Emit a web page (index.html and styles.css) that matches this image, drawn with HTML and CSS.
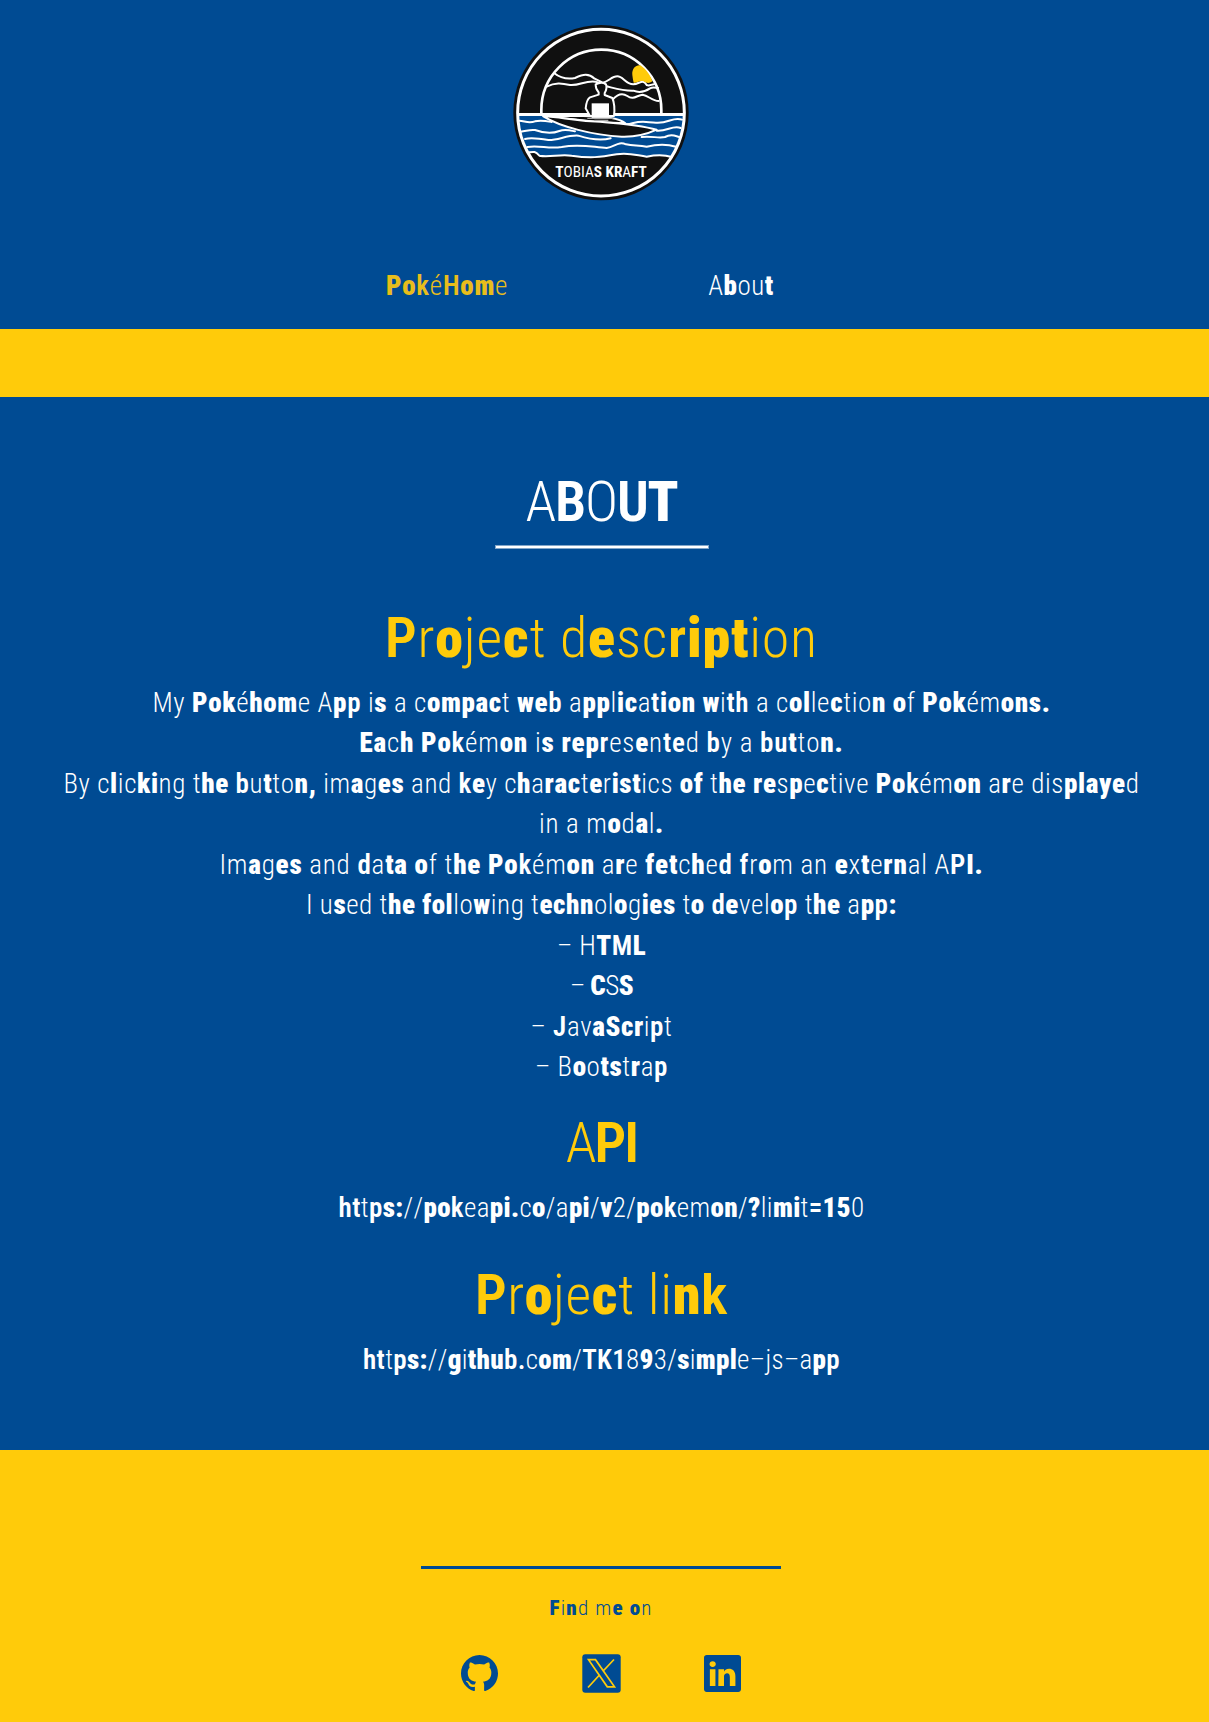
FILE: index.html
```
<!DOCTYPE html>
<html lang="en">
<head>
<meta charset="utf-8">
<title>PokéHome – About</title>
<link rel="stylesheet" href="styles.css">
</head>
<body>
<header class="header">
  <svg class="logo" viewBox="39 27 528 531" role="img" aria-label="Tobias Kraft">
    <circle cx="303" cy="293" r="263" fill="#101010"/>
    <path fill="#004b93" d="M56 300H550C549 345 538 388 515 426C490 418 470 419 440 425C405 420 385 412 350 418C300 427 270 430 215 422C180 416 150 428 118 422C105 408 100 410 88 412C68 376 58 340 56 300Z"/>
    <g fill="none" stroke="#fff" stroke-linecap="round" stroke-linejoin="round">
      <circle cx="303" cy="293" r="250" stroke-width="9"/>
      <path d="M124 296V285A180 181 0 0 1 484 285V296" stroke-width="8"/>
      <path d="M56 298.500H550" stroke-width="9"/>
      <g stroke-width="6">
        <path d="M88 412C100 410 105 408 118 422C150 428 180 416 215 422C270 430 300 427 350 418C385 412 405 420 440 425C470 419 490 418 515 426"/>
        <path d="M162 174C182 190 200 194 225 189C250 178 265 174 284 191L308 203C325 200 335 184 352 184C370 184 375 207 400 208C420 206 428 190 440 210C448 214 454 208 462 208"/>
        <path d="M140 215C165 202 185 204 210 210C240 213 262 192 294 202M320 214C345 220 370 228 400 227C422 236 438 228 450 220C458 215 466 218 474 219"/>
        <path d="M338 254C350 240 366 232 382 243C400 257 412 240 428 239C446 242 456 258 476 258"/>
        <path d="M58 317C75 318 85 326 105 319C122 314 140 318 155 321M62 350C80 348 88 343 105 345C130 354 155 357 178 348C194 342 210 346 225 349"/>
        <path d="M75 372C95 367 120 371 145 375C175 376 200 360 235 362C270 373 302 378 332 370"/>
        <path d="M82 396C120 390 145 403 185 396C240 385 280 397 320 399C345 395 355 378 378 388C400 393 415 390 440 395C470 388 500 387 528 395"/>
        <path d="M335 331C360 322 375 333 400 324C430 316 445 323 468 323C505 326 520 304 546 314M470 347C500 350 520 329 542 339M425 366C455 362 475 371 495 366C515 355 525 363 538 366"/>
      </g>
    </g>
    <path fill="#ffcb0a" d="M397 180C395 160 408 149 421 151C437 162 450 177 457 199C446 207 440 204 431 199C417 195 408 206 401 203Q398 190 397 180Z"/>
    <g fill="#101010" stroke="#fff" stroke-width="6" stroke-linejoin="round">
      <path d="M270 303L257 280Q260 252 270 247L296 239V232Q286 220 287 208Q305 198 318 208Q322 222 314 234V240L337 249Q346 270 342 303Z"/>
      <path d="M130 303H240Q350 302 376 325L300 322Z"/>
      <path d="M130 304C190 306 210 318 300 320C370 326 430 332 470 344C440 358 400 366 365 365C280 361 180 335 130 304Z"/>
    </g>
    <path fill="#fff" d="M275 265H327V309H275Z"/>
    <path fill="none" stroke="#aaa" stroke-width="4" d="M262 310H340M283 316H325"/>
    <text class="logo-name" x="166" y="485" textLength="274" lengthAdjust="spacingAndGlyphs"><tspan class="k">T</tspan>OBIA<tspan class="k">S</tspan> <tspan class="k">KR</tspan>A<tspan class="k">FT</tspan></text>
  </svg>
  <nav class="nav">
    <a class="nav-link active" href="#"><span class="t n1"><b>Po</b><i>k</i>é<i>H</i><b>om</b>e</span></a>
    <a class="nav-link" href="#"><span class="t n2">A<b>b</b>ou<b>t</b></span></a>
  </nav>
</header>
<div class="band"></div>
<main class="main">
  <h1 class="title"><span class="t">A<i>B</i>O<i>U</i><b>T</b></span></h1>
  <hr class="title-rule">
  <h2 class="heading"><span class="t h1"><i>P</i>r<b>o</b>je<b>c</b>t d<b>e</b>sc<i>r</i><b>ipt</b>ion</span></h2>
  <p class="text">
    <span class="t l1">My <b>Pok</b>é<b>hom</b>e A<b>p</b><i>p</i> i<b>s</b> a c<b>ompac</b>t <b>we</b><i>b</i> a<b>pp</b>l<b>ic</b>a<i>t</i><b>ion</b> <b>w</b>i<i>th</i> a c<b>ol</b>le<b>c</b>tio<b>n</b> <b>o</b>f <b>Pok</b>ém<b>ons.</b></span><br>
    <span class="t l2"><b>Ea</b>c<b>h</b> <b>Po</b><i>k</i>ém<b>on</b> i<b>s</b> <b>rep</b><i>r</i>es<b>e</b>n<i>te</i>d <i>b</i>y a <i>bu</i><b>t</b>to<b>n.</b></span><br>
    <span class="t l3">By c<b>l</b>ic<b>ki</b>ng t<b>he</b> <i>b</i>u<b>t</b>to<b>n,</b> im<b>a</b>g<b>es</b> and <i>k</i><b>e</b>y c<b>h</b>a<b>rac</b>t<b>e</b>r<b>ist</b>ics <b>of</b> t<b>he</b> <b>re</b>s<b>p</b>e<b>c</b>tive <b>Po</b><i>k</i>ém<b>on</b> a<b>r</b>e dis<b>playe</b>d</span><br>
    <span class="t l4">in a m<b>o</b>d<b>a</b>l<b>.</b></span><br>
    <span class="t l5">Im<b>a</b>g<b>es</b> and <i>d</i>a<b>ta</b> <b>o</b>f t<b>he</b> <b>Po</b><i>k</i>ém<b>on</b> a<b>r</b>e <b>fet</b>c<b>h</b>e<i>d</i> <i>f</i>r<b>o</b>m an <b>e</b>x<b>t</b>e<b>rn</b>al A<i>P</i><b>I.</b></span><br>
    <span class="t l6">I u<b>s</b>ed t<b>he</b> <b>fol</b>lo<b>w</b>ing t<b>echn</b>ol<b>o</b>g<b>ies</b> t<b>o</b> <i>d</i><b>e</b>vel<b>o</b><i>p</i> t<b>he</b> a<b>p</b><i>p</i><b>:</b></span><br>
    <span class="t l7">– H<b>T</b><i>M</i><b>L</b></span><br>
    <span class="t l8">– <b>C</b>S<b>S</b></span><br>
    <span class="t l9">– <i>J</i>av<b>aScr</b>i<i>p</i>t</span><br>
    <span class="t l10">– B<b>o</b>o<b>ts</b>t<b>r</b>a<i>p</i></span>
  </p>
  <h2 class="heading api"><span class="t">A<i>PI</i></span></h2>
  <p class="text"><span class="t u1"><i>ht</i>t<i>p</i><b>s:</b>//<b>po</b><i>k</i>ea<b>pi.</b>c<b>o</b>/a<b>pi</b>/<b>v</b>2/<b>po</b><i>k</i>em<b>on</b>/<b>?</b>li<b>mi</b>t<i>=</i><b>15</b>0</span></p>
  <h2 class="heading link"><span class="t"><i>P</i>r<b>o</b>je<b>c</b>t li<b>n</b><i>k</i></span></h2>
  <p class="text"><span class="t u2"><i>ht</i>t<i>p</i><b>s:</b>//<b>g</b>i<b>thu</b><i>b.</i>c<b>om</b>/<i>TK1</i>8<b>9</b>3/<b>s</b>i<b>mpl</b>e–js–a<b>p</b><i>p</i></span></p>
</main>
<footer class="footer">
  <hr class="footer-rule">
  <p class="find"><span class="t"><b>F</b>i<b>n</b>d m<b>e</b> <b>o</b>n</span></p>
  <div class="socials">
    <a href="#" aria-label="GitHub"><svg width="37" height="37" viewBox="0 0 16 16" fill="#004b93"><path d="M8 0C3.580 0 0 3.580 0 8c0 3.540 2.290 6.530 5.470 7.590.4.070.55-.17.55-.38 0-.19-.01-.82-.01-1.490-2.010.37-2.530-.49-2.690-.94-.09-.23-.48-.94-.82-1.130-.28-.15-.68-.52-.01-.53.63-.01 1.080.58 1.230.82.72 1.210 1.870.87 2.330.66.070-.52.28-.87.51-1.070-1.780-.2-3.640-.89-3.640-3.950 0-.87.31-1.590.82-2.150-.08-.2-.36-1.020.08-2.120 0 0 .67-.21 2.200.82.64-.18 1.320-.27 2-.27s1.360.09 2 .27c1.530-1.040 2.200-.82 2.200-.82.44 1.100.16 1.920.08 2.120.51.56.82 1.270.82 2.150 0 3.070-1.870 3.750-3.650 3.950.29.25.54.73.54 1.480 0 1.070-.01 1.930-.01 2.200 0 .21.15.46.55.38A8.010 8.010 0 0 0 16 8c0-4.420-3.580-8-8-8"/></svg></a>
    <a href="#" aria-label="X"><svg width="39" height="39" viewBox="0 0 39 39"><rect x=".3" y=".2" width="38.400" height="38.600" rx="3" fill="#004b93"/><path d="M32 5.500L20.700 17.500M17 21.500L6 33.500M6.500 5.700H13.500L32.500 32.800H25.300Z" fill="none" stroke="#ffcb0a" stroke-width="1.700"/></svg></a>
    <a href="#" aria-label="LinkedIn"><svg width="37" height="37" viewBox="0 0 16 16" fill="#004b93"><path d="M0 1.146C0 .513.526 0 1.175 0h13.650C15.474 0 16 .513 16 1.146v13.708c0 .633-.526 1.146-1.175 1.146H1.175C.526 16 0 15.487 0 14.854zm4.943 12.248V6.169H2.542v7.225zm-1.200-8.212c.837 0 1.358-.554 1.358-1.248-.015-.709-.52-1.248-1.342-1.248S2.400 3.226 2.400 3.934c0 .694.521 1.248 1.327 1.248zm4.908 8.212V9.359c0-.216.016-.432.08-.586.173-.431.568-.878 1.232-.878.869 0 1.216.662 1.216 1.634v3.865h2.401V9.250c0-2.220-1.184-3.252-2.764-3.252-1.274 0-1.845.7-2.165 1.193v.025h-.016l.016-.025V6.169h-2.400c.03.678 0 7.225 0 7.225z"/></svg></a>
  </div>
</footer>
</body>
</html>
```
FILE: styles.css
```
* { box-sizing: border-box; }

body {
  margin: 0;
  background: #ffcb0a;
  color: #fff;
  font-family: Roboto, "Open Sans", sans-serif;
  font-weight: 300;
  font-stretch: 79%;
  font-size: 27px;
  font-kerning: none;
}

h1, h2, p { margin: 0; font-weight: 300; }
a { color: inherit; text-decoration: none; }
i { font-style: normal; font-weight: 600; }
b { font-weight: 900; }

.t { white-space: nowrap; }

.header {
  height: 329px;
  padding: 24px 7px 0 0;
  background: #004b93;
}

.logo {
  display: block;
  width: 176px;
  height: 177px;
  margin: 0 auto;
}

.logo-name { font-size: 44px; fill: #fff; font-weight: 400; letter-spacing: 0; }
.logo-name .k { font-weight: 700; }

.nav {
  display: flex;
  gap: 200px;
  margin: 65px 0 0 386px;
  line-height: 40px;
}

.nav-link.active { color: #e8bd1b; }
.n1 { letter-spacing: .75px; }
.n2 { letter-spacing: .5px; }

.band { height: 68px; }

.main {
  height: 1053px;
  padding: 72px 6px 0 0;
  background: #004b93;
  text-align: center;
}

.title, .heading {
  font-size: 56px;
  line-height: 66px;
}

.title { letter-spacing: -1.200px; }

.title-rule {
  width: 214px;
  height: 4px;
  margin: 10px auto 0;
  border: 1px solid #80a5c9;
  background: #fff;
}

.heading { margin: 56px 0 12px; color: #ffcb0a; letter-spacing: .8px; }
.heading.api { margin-top: 22px; letter-spacing: -2px; }
.heading.link { margin-top: 34px; letter-spacing: .55px; }

.text { line-height: 40.450px; }

.l1 { letter-spacing: .664px; }
.l2 { letter-spacing: .811px; }
.l3 { letter-spacing: .625px; }
.l4 { letter-spacing: .707px; }
.l5 { letter-spacing: .786px; }
.l6 { letter-spacing: .570px; }
.l7 { letter-spacing: .438px; }
.l8 { letter-spacing: -.541px; }
.l9 { letter-spacing: .592px; }
.l10 { letter-spacing: .599px; }
.u1 { letter-spacing: .368px; }
.u2 { letter-spacing: .332px; }

.footer { padding: 116px 7px 0 0; color: #004b93; }

.footer-rule {
  width: 360px;
  height: 3px;
  margin: 0 auto;
  border: 0;
  background: #004b93;
}

.find {
  margin-top: 23px;
  font-size: 21px;
  line-height: 32px;
  letter-spacing: 1.170px;
  text-align: center;
}

.socials {
  display: flex;
  align-items: center;
  justify-content: center;
  gap: 83.500px;
  margin-top: 30px;
}

.socials svg { display: block; }
```
